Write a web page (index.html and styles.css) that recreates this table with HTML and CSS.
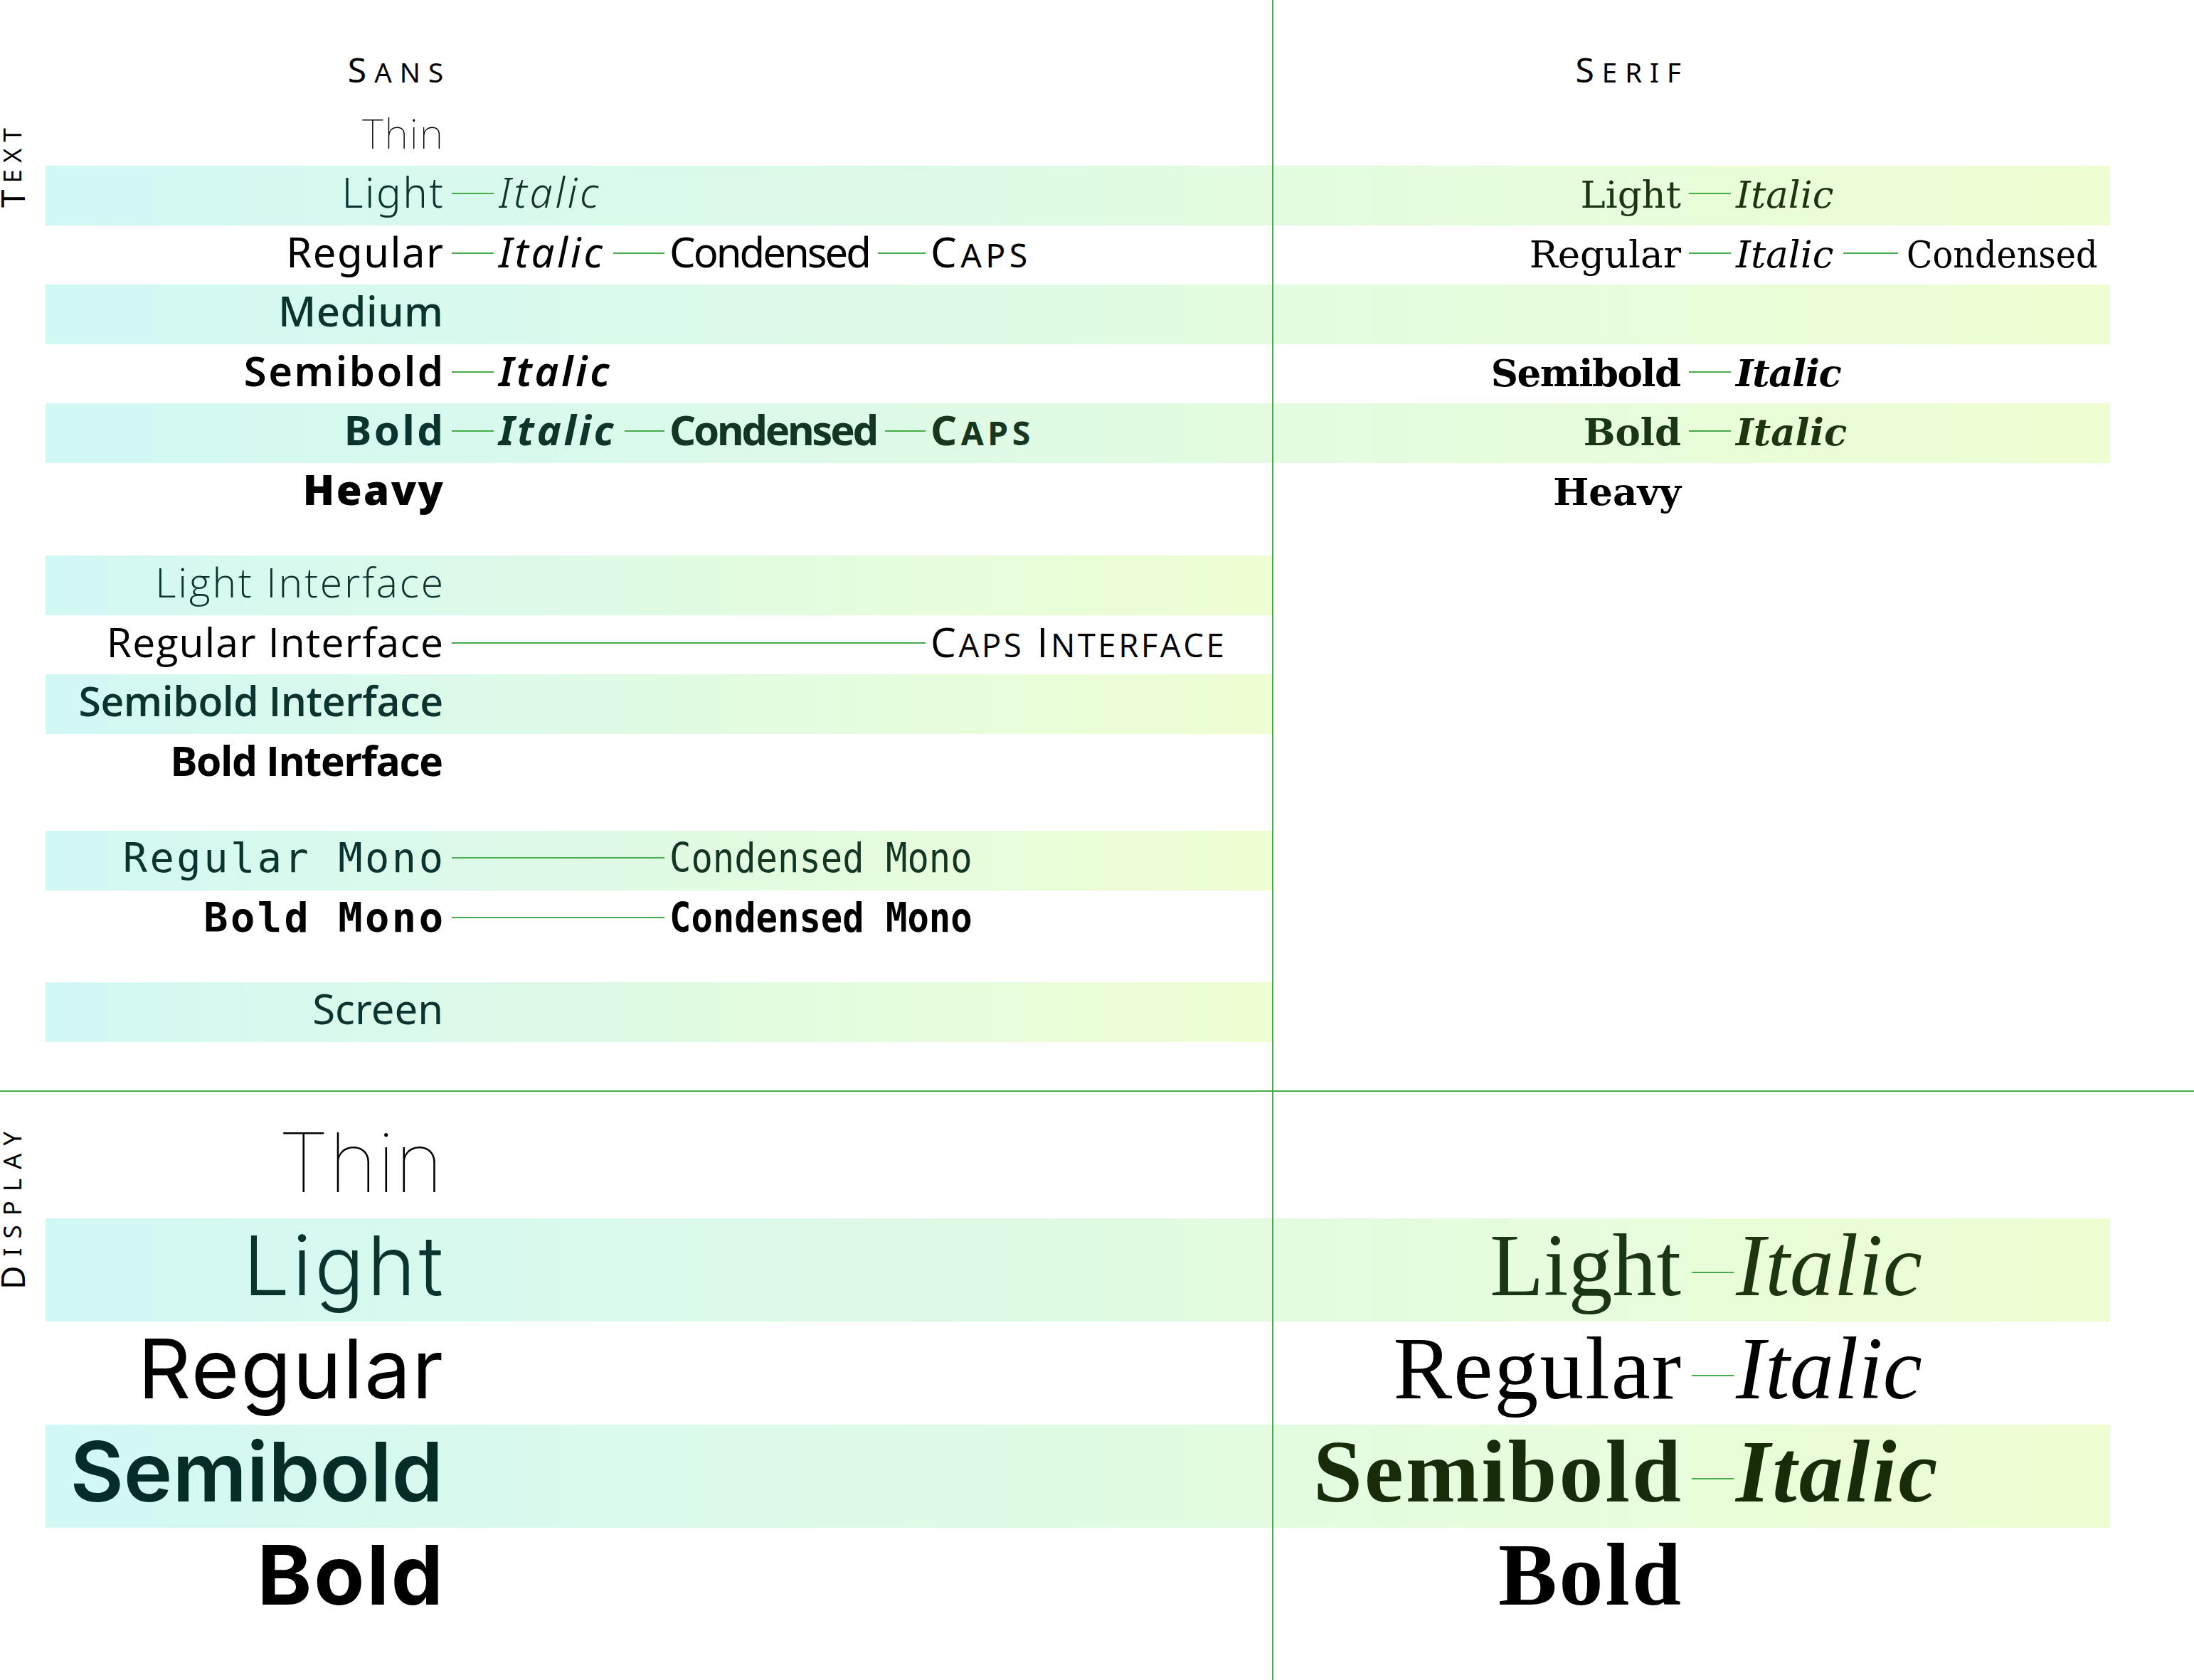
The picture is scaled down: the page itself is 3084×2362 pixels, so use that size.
FILE: index.html
```html
<!DOCTYPE html>
<html lang="en">
<head>
<meta charset="utf-8">
<title>Type family specimen</title>
<link rel="stylesheet" href="styles.css">
</head>
<body>
<main class="sheet">
  <section class="sec sec-text">
    <div class="side side-text">T<span class="sc">ext</span></div>
    <div class="col col-l">
      <div class="grp">
        <div class="row head"><div class="lab hd">S<span class="sc">ans</span></div></div>
        <div class="row"><div class="lab ts w100">Thin</div></div>
        <div class="row band bf-l"><div class="lab ts w300">Light</div><div class="link"></div><div class="item ts w300 it c2">Italic</div></div>
        <div class="row"><div class="lab ts w400">Regular</div><div class="link"></div><div class="item ts w400 it">Italic<span class="link"></span></div><div class="item ts w400 cond">Condensed<span class="link"></span></div><div class="item ts w400 caps"><span>C<span class="sc">aps</span></span></div></div>
        <div class="row band bf-l"><div class="lab ts w500">Medium</div></div>
        <div class="row"><div class="lab ts w600">Semibold</div><div class="link"></div><div class="item ts w600 it">Italic</div></div>
        <div class="row band bf-l"><div class="lab ts w700">Bold</div><div class="link"></div><div class="item ts w700 it c2">Italic<span class="link"></span></div><div class="item ts w700 cond c3">Condensed<span class="link"></span></div><div class="item ts w700 caps c4"><span>C<span class="sc">aps</span></span></div></div>
        <div class="row"><div class="lab ts w900">Heavy</div></div>
      </div>
      <div class="grp g-iface">
        <div class="row band bh"><div class="lab ti w300">Light Interface</div></div>
        <div class="row"><div class="lab ti w400">Regular Interface</div><div class="link span3"></div><div class="item ti w400 caps capsi"><span>C<span class="sc">aps</span> I<span class="sc">nterface</span></span></div></div>
        <div class="row band bh"><div class="lab ti w600">Semibold Interface</div></div>
        <div class="row"><div class="lab ti w700">Bold Interface</div></div>
      </div>
      <div class="grp g-mono">
        <div class="row band bh mrow"><div class="lab tm w400">Regular Mono</div><div class="link span2"></div><div class="item tm w400 c3 span2"><span class="cm">Condensed Mono</span></div></div>
        <div class="row mrow"><div class="lab tm w700">Bold Mono</div><div class="link span2"></div><div class="item tm w700 span2"><span class="cm">Condensed Mono</span></div></div>
      </div>
      <div class="grp g-screen">
        <div class="row band bh"><div class="lab ts w400 scr">Screen</div></div>
      </div>
    </div>
    <div class="vline"></div>
    <div class="col col-r">
      <div class="row head"><div class="lab hd">S<span class="sc">erif</span></div></div>
      <div class="row"></div>
      <div class="row band bf-r"><div class="lab tf w400">Light</div><div class="link"></div><div class="item tf w400 it c2">Italic</div></div>
      <div class="row"><div class="lab tf w400">Regular</div><div class="link"></div><div class="item tf w400 it">Italic<span class="link"></span></div><div class="item tf w400 cond">Condensed</div></div>
      <div class="row band bf-r"></div>
      <div class="row"><div class="lab tf w700 semi">Semibold</div><div class="link"></div><div class="item tf w700 it semi">Italic</div></div>
      <div class="row band bf-r"><div class="lab tf w700">Bold</div><div class="link"></div><div class="item tf w700 it c2">Italic</div></div>
      <div class="row"><div class="lab tf w700 heavy">Heavy</div></div>
    </div>
  </section>

  <section class="sec sec-display">
    <div class="side side-display">D<span class="sc">isplay</span></div>
    <div class="col col-l">
      <div class="row drow"><div class="lab ds w100">Thin</div></div>
      <div class="row drow band bf-l"><div class="lab ds w300">Light</div></div>
      <div class="row drow"><div class="lab ds w400">Regular</div></div>
      <div class="row drow band bf-l"><div class="lab ds w600 dk">Semibold</div></div>
      <div class="row drow"><div class="lab ds w700">Bold</div></div>
    </div>
    <div class="vline"></div>
    <div class="col col-r">
      <div class="row drow"></div>
      <div class="row drow band bf-r"><div class="lab df w400">Light</div><div class="link dlink"></div><div class="item df w400 it c2 span2">Italic</div></div>
      <div class="row drow"><div class="lab df w400">Regular</div><div class="link dlink"></div><div class="item df w400 it span2">Italic</div></div>
      <div class="row drow band bf-r"><div class="lab df w700 dk">Semibold</div><div class="link dlink"></div><div class="item df w700 it c2 dk span2">Italic</div></div>
      <div class="row drow"><div class="lab df w700">Bold</div></div>
    </div>
  </section>
</main>
</body>
</html>
```

FILE: styles.css
```css
* { box-sizing: border-box; margin: 0; padding: 0; }

:root {
  --green: #47ab4b;
  --c1: #d2f8f5;
  --c2: #eefed2;
}

html, body {
  width: 3084px;
  height: 2362px;
  overflow: hidden;
  background: #ffffff;
}

body {
  font-family: "Noto Sans", "Open Sans", sans-serif;
  color: #000;
}

.sheet { display: block; }

/* sections */
.sec {
  display: grid;
  grid-template-columns: 64px 1724px 2px 1176px 1fr;
}
.sec-text {
  height: 1535px;
  border-bottom: 2px solid var(--green);
}
.sec-display {
  height: 827px;
}
.sec-display .col { padding-top: 33px; }

.vline { background: var(--green); }

.col { display: flex; flex-direction: column; }
.grp { display: flex; flex-direction: column; }
.g-iface { margin-top: 47px; }
.g-mono { margin-top: 53px; }
.g-screen { margin-top: 46px; }

/* side labels */
.side {
  writing-mode: vertical-rl;
  transform: rotate(180deg);
  font: 400 46px/34px "Noto Sans", sans-serif;
  letter-spacing: 9px;
  align-self: start;
  justify-self: start;
  white-space: nowrap;
}
.side .sc { font-size: 0.76em; }
.side-text { margin-top: 160px; height: 132px; }
.side-display { margin-top: 40px; height: 238px; letter-spacing: 13px; }

.sc { font-size: 0.8em; text-transform: uppercase; }

/* rows */
.row {
  display: grid;
  align-items: baseline;
  height: 83.5px;
  flex: none;
}
.col-l .row { grid-template-columns: 559px 78px 240px 367px 1fr; }
.col-r .row { grid-template-columns: 573px 77px 240px 1fr; }
.row.head { height: 149.5px; padding-top: 74px; }
.row.drow { height: 145px; }

.bf-l { background: linear-gradient(90deg, var(--c1), var(--c2)) 0 0 / 2902px 100% no-repeat; }
.bf-r { background: linear-gradient(90deg, var(--c1), var(--c2)) -1726px 0 / 2902px 100% no-repeat; }
.bh { background: linear-gradient(90deg, var(--c1), var(--c2)); }

.lab { text-align: right; white-space: nowrap; }
.item { display: flex; align-items: baseline; white-space: nowrap; }
.item > .link { flex: 1; }

.link {
  height: 21px;
  border-top: 2px solid var(--green);
  margin: 0 7px 0 12px;
}
.col-r .link { margin: 0 7px 0 11px; }
.col-r .item > .link { margin: 0 12px 0 14px; }
.link.dlink { height: 33px; margin: 0 3px 0 15px; }
.span2 { grid-column: span 2; }
.span3 { grid-column: span 3; }

/* header */
.hd {
  font: 400 48px/48px "Noto Sans", sans-serif;
  letter-spacing: 11px;
  margin-right: -11px;
}

/* type styles */
.ts { font: 58px/74px "Noto Sans", "Open Sans", sans-serif; }
.ti { font: 57px/74px "Open Sans", "Noto Sans", sans-serif; }
.tm { font: 57px/76px "DejaVu Sans Mono", "Liberation Mono", monospace; letter-spacing: 3.5px; }
.tf { font: 53px/81px "DejaVu Serif", "Liberation Serif", serif; }
.ds { font: 116px/133px Inter, "Noto Sans", sans-serif; }
.df { font: 124px/133px "Liberation Serif", "DejaVu Serif", serif; }

.w100 { font-weight: 100; }
.w300 { font-weight: 300; }
.w400 { font-weight: 400; }
.w500 { font-weight: 500; }
.w600 { font-weight: 600; }
.w700 { font-weight: 700; }
.w900 { font-weight: 900; }
.it { font-style: italic; }
.cond { font-stretch: semi-condensed; }
.ts.cond.w400 { letter-spacing: -3px; }
.ts.cond.w700 { letter-spacing: -3.3px; }
.tf.cond { font-family: "DejaVu Serif Condensed", "DejaVu Serif", serif; }

/* width tuning for the sans text styles */
.lab.ts.w100 { letter-spacing: 2px; margin-right: -2px; }
.lab.ts.w300 { letter-spacing: 2.5px; margin-right: -2.5px; }
.lab.ts.w400 { letter-spacing: 1.5px; margin-right: -1.5px; }
.lab.ts.w500 { letter-spacing: 0.5px; margin-right: -0.5px; }
.lab.ts.w600 { letter-spacing: 2.5px; margin-right: -2.5px; }
.lab.ts.w700 { letter-spacing: 3.5px; margin-right: -3.5px; }
.lab.ts.w900 { letter-spacing: 2.5px; margin-right: -2.5px; }
.lab.ts.scr { letter-spacing: 0; margin-right: 0; }
.ts.it { letter-spacing: 3.7px; }

.lab.ti.w300 { letter-spacing: 2.8px; margin-right: -2.8px; }
.lab.ti.w400 { letter-spacing: 1.2px; margin-right: -1.2px; }
.lab.ti.w600 { letter-spacing: -0.4px; margin-right: 0.4px; }
.lab.ti.w700 { letter-spacing: -1.4px; margin-right: 1.4px; }

.lab.ds.w300 { letter-spacing: 4px; margin-right: -4px; }
.lab.ds.w400 { letter-spacing: 2px; margin-right: -2px; }
.lab.ds.w700 { letter-spacing: 3px; margin-right: -3px; }

.lab.df.w400 { letter-spacing: 0; }
.row.drow:nth-child(3) .lab.df { letter-spacing: 2px; margin-right: -2px; }
.lab.df.w700 { letter-spacing: 3px; margin-right: -3px; }
.item.df.w700 { letter-spacing: 3px; }

.tf.semi { letter-spacing: -1.5px; }
.lab.tf.semi { margin-right: 1.5px; }

.caps { letter-spacing: 5.5px; }
.capsi { letter-spacing: 3.5px; }

.cm {
  display: inline-block;
  letter-spacing: 0;
  transform: scaleX(0.886);
  transform-origin: 0 50%;
}
.mrow .lab { letter-spacing: 3.5px; margin-right: -3.5px; }

/* text colours inside bands */
.col-l .band .lab { color: #0b342e; }
.col-l .band .c2 { color: #0e3529; }
.col-l .band .c3 { color: #123622; }
.col-l .band .c4 { color: #16361d; }
.col-r .band .lab { color: #1b3614; }
.col-r .band .c2 { color: #1d3511; }
.col-l .band .dk { color: #062c27; }
.col-r .band .dk { color: #182c09; }
```
